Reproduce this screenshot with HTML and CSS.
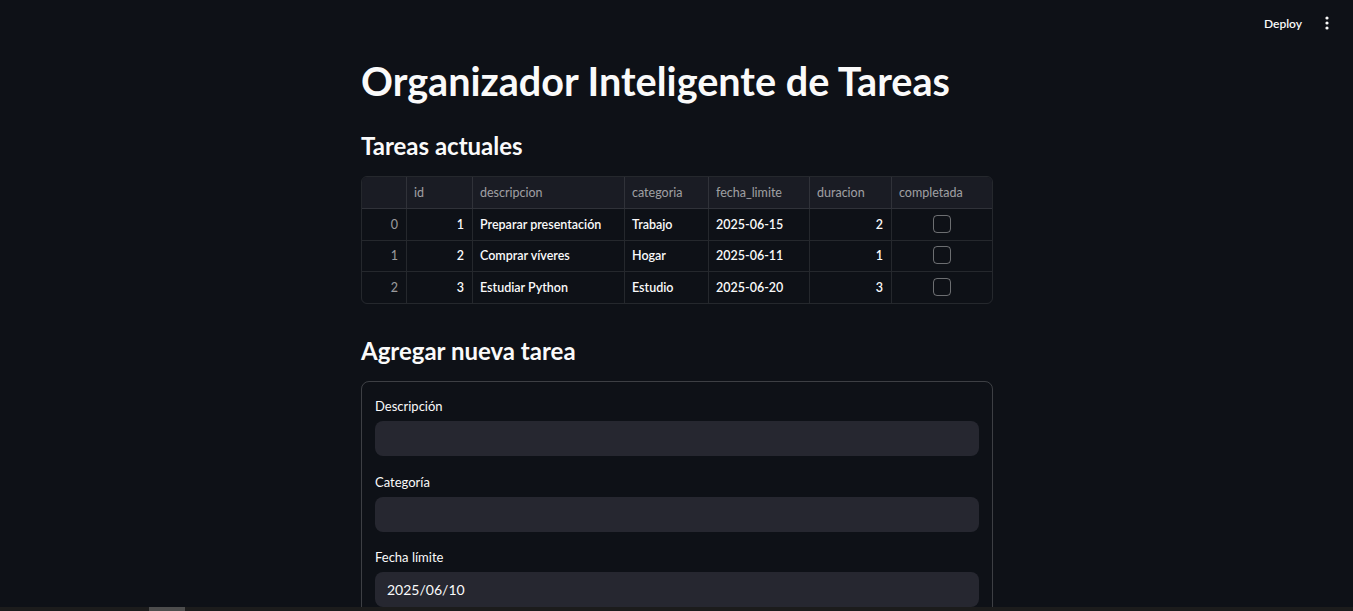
FILE: index.html
```html
<!DOCTYPE html>
<html lang="es">
<head>
<meta charset="utf-8">
<title>Organizador Inteligente de Tareas</title>
<link rel="stylesheet" href="styles.css">
</head>
<body>
<header class="topbar">
  <span class="deploy">Deploy</span>
  <span class="menu" aria-label="menu">
    <svg width="4" height="14" viewBox="0 0 4 14"><circle cx="2" cy="2" r="1.6" fill="#fafafa"/><circle cx="2" cy="7" r="1.6" fill="#fafafa"/><circle cx="2" cy="12" r="1.6" fill="#fafafa"/></svg>
  </span>
</header>
<main class="page">
  <div class="content">
    <h1 class="title">Organizador Inteligente de Tareas</h1>
    <h2 class="subtitle sub-first">Tareas actuales</h2>
    <div class="grid">
      <div class="row head">
        <div class="cell"></div>
        <div class="cell">id</div>
        <div class="cell">descripcion</div>
        <div class="cell">categoria</div>
        <div class="cell">fecha_limite</div>
        <div class="cell">duracion</div>
        <div class="cell">completada</div>
      </div>
      <div class="row">
        <div class="cell idx">0</div>
        <div class="cell num">1</div>
        <div class="cell">Preparar presentación</div>
        <div class="cell">Trabajo</div>
        <div class="cell">2025-06-15</div>
        <div class="cell num">2</div>
        <div class="cell chk"><span class="box"></span></div>
      </div>
      <div class="row">
        <div class="cell idx">1</div>
        <div class="cell num">2</div>
        <div class="cell">Comprar víveres</div>
        <div class="cell">Hogar</div>
        <div class="cell">2025-06-11</div>
        <div class="cell num">1</div>
        <div class="cell chk"><span class="box"></span></div>
      </div>
      <div class="row last">
        <div class="cell idx">2</div>
        <div class="cell num">3</div>
        <div class="cell">Estudiar Python</div>
        <div class="cell">Estudio</div>
        <div class="cell">2025-06-20</div>
        <div class="cell num">3</div>
        <div class="cell chk"><span class="box"></span></div>
      </div>
    </div>
    <h2 class="subtitle sub-second">Agregar nueva tarea</h2>
    <form class="form">
      <div class="field">
        <label class="label">Descripción</label>
        <div class="input"></div>
      </div>
      <div class="field">
        <label class="label">Categoría</label>
        <div class="input"></div>
      </div>
      <div class="field">
        <label class="label">Fecha límite</label>
        <div class="input">2025/06/10</div>
      </div>
    </form>
  </div>
</main>
<div class="hscroll"><div class="thumb"></div></div>
</body>
</html>
```
FILE: styles.css
```css
* { box-sizing: border-box; }
html, body { margin: 0; padding: 0; height: 100%; overflow: hidden; }
body {
  background: #0e1117;
  color: #fafafa;
  font-family: Lato, "Noto Sans", sans-serif;
}
.topbar {
  height: 45px;
  display: flex;
  justify-content: flex-end;
  align-items: center;
  padding-right: 24px;
  gap: 23px;
}
.deploy { font-size: 12px; font-weight: 600; color: #fafafa; margin-top: 1px; }
.menu { display: flex; align-items: center; height: 14px; margin-top: 1px; }
.menu svg { display: block; }
.page { display: flex; justify-content: center; padding-left: 1px; }
.content { width: 632px; padding-top: 9px; }
.title {
  margin: 0;
  font-size: 39.6px;
  line-height: 53px;
  font-weight: 700;
}
.subtitle {
  margin: 0;
  font-size: 24px;
  line-height: 34px;
  font-weight: 700;
}
.sub-first { margin-top: 22px; margin-bottom: 13px; }
.sub-second { margin-top: 30px; margin-bottom: 13px; }
.grid {
  border: 1px solid rgba(250,250,250,0.1);
  border-radius: 6px;
  overflow: hidden;
  font-size: 12.5px;
}
.row {
  display: grid;
  grid-template-columns: 45px 66px 152px 84px 101px 82px 100px;
  height: 31.5px;
  border-bottom: 1px solid rgba(250,250,250,0.1);
}
.row.last { border-bottom: none; height: 31px; }
.row.head { background: #1a1c24; color: rgba(250,250,250,0.6); height: 32px; }
.cell {
  display: flex;
  align-items: center;
  padding: 0 7px;
  border-right: 1px solid rgba(250,250,250,0.1);
  white-space: nowrap;
}
.cell:last-child { border-right: none; }
.idx { justify-content: flex-end; color: rgba(250,250,250,0.6); padding-right: 8px; }
.num { justify-content: flex-end; padding-right: 8px; }
.row:not(.head) .cell:not(.idx) { font-weight: 600; }
.chk { justify-content: center; }
.box {
  width: 18px; height: 18px;
  border: 1px solid rgba(250,250,250,0.4);
  border-radius: 4px;
  margin-top: -1px;
}
.form {
  border: 1px solid rgba(250,250,250,0.2);
  border-radius: 8px;
  padding: 14px 13px 20px;
  display: flex;
  flex-direction: column;
  gap: 15.5px;
}
.field { display: flex; flex-direction: column; }
.label { font-size: 13px; line-height: 20px; margin-bottom: 5px; color: #fafafa; }
.input {
  height: 35px;
  background: #262730;
  border-radius: 8px;
  display: flex;
  align-items: center;
  padding-left: 12px;
  font-size: 14px;
  color: #fafafa;
}
.hscroll {
  position: fixed;
  left: 0; right: 0; bottom: 0;
  height: 4px;
  background: #1c1c1c;
}
.thumb {
  position: absolute;
  left: 149px; top: 0;
  width: 36px; height: 4px;
  background: #4d4d4d;
}
```
